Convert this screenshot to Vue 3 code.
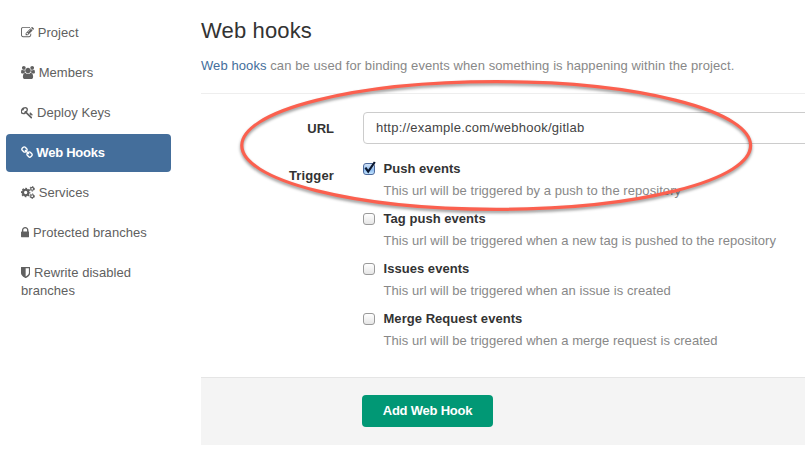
<script setup>
const nav = [
  { label: 'Project', width: 13, box: '0 0 1792 1792', name: 'edit' },
  { label: 'Members', width: 14, box: '0 0 1920 1792', name: 'users' },
  { label: 'Deploy Keys', width: 12.3, box: '64 0 1690 1792', name: 'key' },
  { label: 'Web Hooks', width: 12, box: '64 0 1664 1792', name: 'link', active: true },
  { label: 'Services', width: 14, box: '0 0 1920 1792', name: 'cogs' },
  { label: 'Protected branches', width: 8.4, box: '320 0 1152 1792', name: 'lock' },
  { label: 'Rewrite disabled branches', width: 9.3, box: '256 0 1280 1792', name: 'shield' },
]

const paths = {
  edit: 'M888 1184l116-116-152-152-116 116v56h96v96h56zm440-720q-16-16-33 1l-350 350q-17 17-1 33t33-1l350-350q17-17 1-33zm80 594v190q0 119-84.5 203.5t-203.5 84.5h-832q-119 0-203.5-84.5t-84.5-203.5v-832q0-119 84.5-203.5t203.5-84.5h832q63 0 117 25 15 7 18 23 3 17-9 29l-49 49q-14 14-32 8-23-6-45-6h-832q-66 0-113 47t-47 113v832q0 66 47 113t113 47h832q66 0 113-47t47-113v-126q0-13 9-22l64-64q15-15 35-7t20 29zm-96-738l288 288-672 672h-288v-288zm444 132l-92 92-288-288 92-92q28-28 68-28t68 28l152 152q28 28 28 68t-28 68z',
  users: 'M593 896q-162 5-265 128h-134q-82 0-138-40.5t-56-118.5q0-353 124-353 6 0 43.5 21t97.5 42.5 119 21.5q67 0 133-23-5 37-5 66 0 139 81 256zm1071 637q0 120-73 189.5t-194 69.5h-874q-121 0-194-69.5t-73-189.5q0-53 3.5-103.5t14-109 26.5-108.5 43-97.5 62-81 85.5-53.5 111.5-20q10 0 43 21.5t73 48 107 48 135 21.5 135-21.5 107-48 73-48 43-21.5q61 0 111.5 20t85.5 53.5 62 81 43 97.5 26.5 108.5 14 109 3.5 103.5zm-1024-1277q0 106-75 181t-181 75-181-75-75-181 75-181 181-75 181 75 75 181zm704 384q0 159-112.5 271.5t-271.5 112.5-271.5-112.5-112.5-271.5 112.5-271.5 271.5-112.5 271.5 112.5 112.5 271.5zm576 225q0 78-56 118.5t-138 40.5h-134q-103-123-265-128 81-117 81-256 0-29-5-66 66 23 133 23 59 0 119-21.5t97.5-42.5 43.5-21q124 0 124 353zm-128-609q0 106-75 181t-181 75-181-75-75-181 75-181 181-75 181 75 75 181z',
  key: 'M832 512q0-80-56-136t-136-56-136 56-56 136q0 42 19 83-41-19-83-19-80 0-136 56t-56 136 56 136 136 56 136-56 56-136q0-42-19-83 41 19 83 19 80 0 136-56t56-136zm851 704q0 17-49 66t-66 49q-9 0-28.5-16t-36.5-33-38.5-40-24.5-26l-96 96 220 220q28 28 28 68 0 42-39 81t-81 39q-40 0-68-28l-671-671q-176 131-365 131-163 0-265.5-102.5t-102.5-265.5q0-160 95-313t248-248 313-95q163 0 265.5 102.5t102.5 265.5q0 189-131 365l355 355 96-96q-3-3-26-24.5t-40-38.5-33-36.5-16-28.5q0-17 49-66t66-49q13 0 23 10 6 6 46 44.5t82 79.5 86.5 86 73 78 28.5 41z',
  link: 'M1520 1216q0-40-28-68l-208-208q-28-28-68-28-42 0-72 32 3 3 19 18.5t21.5 21.5 15 19 13 25.5 3.5 27.5q0 40-28 68t-68 28q-15 0-27.5-3.5t-25.5-13-19-15-21.5-21.5-18.5-19q-33 31-33 73 0 40 28 68l206 207q27 27 68 27 40 0 68-26l147-146q28-28 28-67zm-703-705q0-40-28-68l-206-207q-28-28-68-28-39 0-68 27l-147 146q-28 28-28 67 0 40 28 68l208 208q27 27 68 27 42 0 72-31-3-3-19-18.5t-21.5-21.5-15-19-13-25.5-3.5-27.5q0-40 28-68t68-28q15 0 27.5 3.5t25.5 13 19 15 21.5 21.5 18.5 19q33-31 33-73zm895 705q0 120-85 203l-147 146q-83 83-203 83-121 0-204-85l-206-207q-83-83-83-203 0-123 88-209l-88-88q-86 88-208 88-120 0-204-84l-208-208q-84-84-84-204t85-203l147-146q83-83 203-83 121 0 204 85l206 207q83 83 83 203 0 123-88 209l88 88q86-88 208-88 120 0 204 84l208 208q84 84 84 204z',
  lock: 'M640 768h512v-192q0-106-75-181t-181-75-181 75-75 181v192zm832 96v576q0 40-28 68t-68 28h-960q-40 0-68-28t-28-68v-576q0-40 28-68t68-28h32v-192q0-184 132-316t316-132 316 132 132 316v192h32q40 0 68 28t28 68z',
  shield: 'M1344 960v-640h-448v1137q119-63 213-137 235-184 235-360zm192-768v768q0 86-33.5 170.5t-83 150-118 127.5-126.5 103-121 77.5-89.5 49.5-42.5 20q-12 6-26 6t-26-6q-16-7-42.5-20t-89.5-49.5-121-77.5-126.5-103-118-127.5-83-150-33.5-170.5v-768q0-26 19-45t45-19h1152q26 0 45 19t19 45z',
}

const triggers = [
  { title: 'Push events', text: 'This url will be triggered by a push to the repository', checked: true },
  { title: 'Tag push events', text: 'This url will be triggered when a new tag is pushed to the repository' },
  { title: 'Issues events', text: 'This url will be triggered when an issue is created' },
  { title: 'Merge Request events', text: 'This url will be triggered when a merge request is created' },
]
</script>

<template>
  <div class="page">
    <nav class="side">
      <a v-for="n in nav" :key="n.name" class="item" :class="{ active: n.active }">
        <svg class="icon" :width="n.width" height="13" :viewBox="n.box" fill="currentColor">
          <g v-if="n.name === 'cogs'" fill="none" stroke="currentColor">
            <circle cx="640" cy="896" r="370" stroke-width="290" />
            <circle cx="640" cy="896" r="560" stroke-width="190" stroke-dasharray="250 190" stroke-dashoffset="125" />
            <circle cx="1536" cy="384" r="205" stroke-width="165" />
            <circle cx="1536" cy="384" r="315" stroke-width="130" stroke-dasharray="190 140" />
            <circle cx="1536" cy="1408" r="205" stroke-width="165" />
            <circle cx="1536" cy="1408" r="315" stroke-width="130" stroke-dasharray="190 140" />
          </g>
          <path v-else :d="paths[n.name]" />
        </svg>
        {{ n.label }}
      </a>
    </nav>

    <main class="main">
      <h3 class="title">Web hooks</h3>
      <p class="intro"><a class="link">Web hooks</a> can be used for binding events when something is happening within the project.</p>
      <form class="form" @submit.prevent>
        <div class="row">
          <label class="label url-label">URL</label>
          <div class="input">http://example.com/webhook/gitlab</div>
        </div>
        <div class="row triggers">
          <div class="label trigger-label">Trigger</div>
          <div class="options">
            <div v-for="t in triggers" :key="t.title" class="option">
              <span class="box" :class="{ on: t.checked }">
                <svg v-if="t.checked" class="tick" width="14" height="14" viewBox="0 0 14 14">
                  <path d="M2.4 6.6L5.2 10.6L11.8 1" fill="none" stroke="#0b1830" stroke-width="2.2" />
                </svg>
              </span>
              <div class="option-body">
                <div class="option-title">{{ t.title }}</div>
                <div class="option-text">{{ t.text }}</div>
              </div>
            </div>
          </div>
        </div>
        <div class="actions">
          <button class="btn">Add Web Hook</button>
        </div>
      </form>
    </main>

    <svg class="highlight" width="540" height="150" viewBox="226 70 540 150">
      <ellipse cx="496.2" cy="145.5" rx="254.4" ry="63.8" fill="none" stroke="#fb604f" stroke-width="3.2" />
    </svg>
  </div>
</template>

<style>
body {
  background: #fff;
  overflow: hidden;
}
</style>

<style scoped>
.page {
  position: relative;
  display: flex;
  box-sizing: border-box;
  width: 805px;
  height: 468px;
  overflow: hidden;
  font: 13px/18px "Liberation Sans", Arial, sans-serif;
  color: #333;
}
.side {
  display: flex;
  flex-direction: column;
  gap: 2px;
  flex: none;
  width: 165px;
  padding: 14px 30px 0 6px;
}
.item {
  padding: 10px 15px;
  border-radius: 4px;
  color: #606060;
  letter-spacing: 0.06px;
}
.item.active {
  background: #446e9b;
  color: #fff;
  font-weight: bold;
  letter-spacing: -0.25px;
}
.icon {
  display: inline-block;
  vertical-align: -2px;
}
.main {
  flex: 1;
  min-width: 0;
}
.title {
  margin: 17px 0 0;
  font-size: 22px;
  line-height: 28px;
  font-weight: normal;
  letter-spacing: 0.15px;
}
.intro {
  margin: 12px 0 0;
  padding-bottom: 18px;
  border-bottom: 1px solid #eee;
  color: #888;
  white-space: nowrap;
  letter-spacing: 0.085px;
}
.link {
  color: #446e9b;
}
.form {
  padding-top: 18px;
}
.row {
  display: flex;
  gap: 29px;
}
.label {
  flex: none;
  width: 133px;
  text-align: right;
  font-weight: bold;
}
.url-label {
  padding-top: 8px;
}
.input {
  box-sizing: border-box;
  flex: none;
  width: 460px;
  height: 32px;
  padding: 6px 12px;
  border: 1px solid #ccc;
  border-radius: 4px;
  color: #444;
  letter-spacing: 0.25px;
}
.triggers {
  padding-top: 15px;
}
.trigger-label {
  padding-top: 8px;
  letter-spacing: 0.15px;
}
.option {
  display: flex;
  gap: 8.5px;
  height: 50px;
}
.option-body {
  padding-top: 1px;
}
.box {
  box-sizing: border-box;
  flex: none;
  width: 12px;
  height: 12px;
  margin-top: 4px;
  border: 1px solid #9a9a9a;
  border-radius: 3px;
  background: linear-gradient(#fff, #e6e6e6);
}
.box.on {
  position: relative;
  border-color: #4e6a9c;
  background: linear-gradient(#d3e4f8, #8fbdf0 60%, #c2e4ff);
}
.tick {
  position: absolute;
  left: -1px;
  top: -3px;
}
.option-title {
  font-weight: bold;
  letter-spacing: 0.04px;
}
.option-text {
  margin-top: 4px;
  color: #888;
  white-space: nowrap;
  letter-spacing: 0.065px;
}
.actions {
  box-sizing: border-box;
  height: 68px;
  margin-top: 18px;
  padding: 17px 0 0 161px;
  border-top: 1px solid #e5e5e5;
  background: #f4f4f4;
}
.btn {
  display: block;
  width: 131px;
  height: 32px;
  padding: 0;
  border: 0;
  border-radius: 4px;
  background: #019875;
  color: #fff;
  font: bold 13px/18px "Liberation Sans", Arial, sans-serif;
  letter-spacing: -0.22px;
}
.highlight {
  position: absolute;
  left: 226px;
  top: 70px;
  pointer-events: none;
  filter: drop-shadow(0 2px 1.5px rgba(0, 0, 0, 0.42));
}
</style>
